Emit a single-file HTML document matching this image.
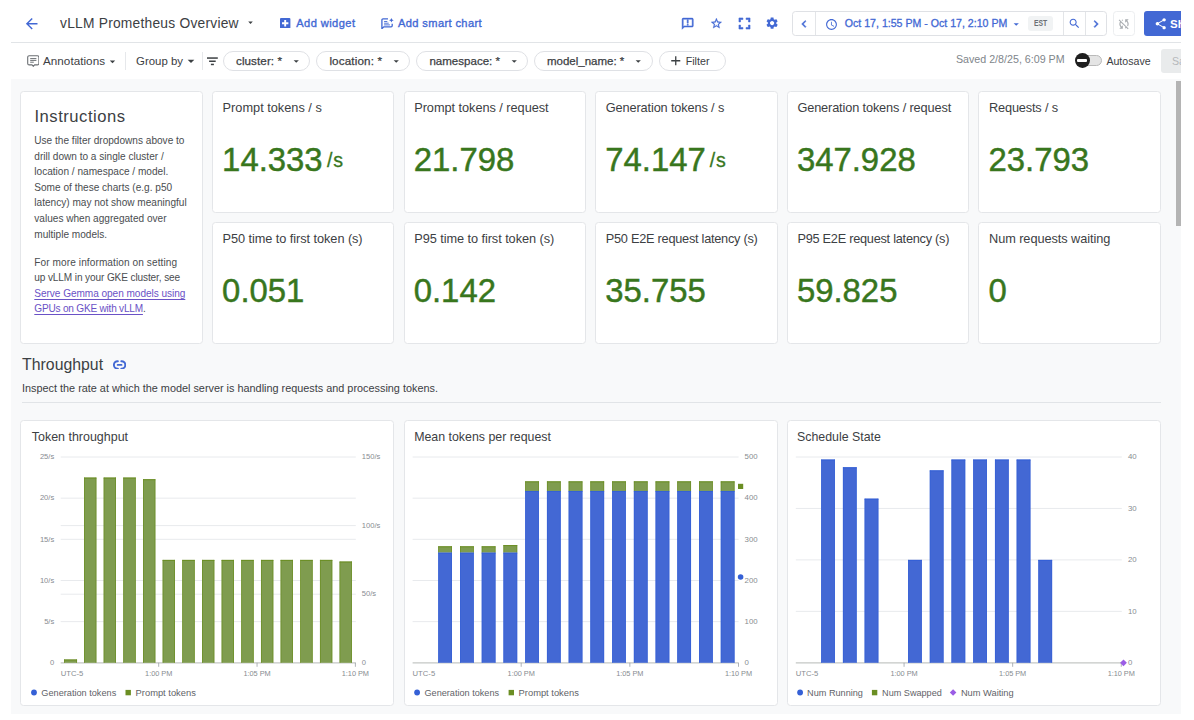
<!DOCTYPE html>
<html lang="en"><head><meta charset="utf-8"><title>vLLM Prometheus Overview</title>
<style>
html,body{margin:0;padding:0;background:#fff;}
body{width:1194px;height:720px;overflow:hidden;position:relative;font-family:"Liberation Sans",sans-serif;}
#bg{position:absolute;left:11px;top:79px;width:1170px;height:635px;background:#f8f9fa;}
#clip{position:absolute;left:0;top:0;width:1181px;height:720px;overflow:hidden;}
.abs{position:absolute;}
.ic{position:absolute;display:block;}
.t{position:absolute;white-space:pre;line-height:1;font-family:"Liberation Sans",sans-serif;}
.card{background:#fff;border:1px solid #e4e6e9;border-radius:3.5px;box-sizing:border-box;}
.box{border:1px solid #dfe1e5;border-radius:3.5px;box-sizing:border-box;background:#fff;}
.chip{border:1px solid #dfe1e5;border-radius:10px;background:#fff;}
#sv{position:absolute;left:0;top:0;}
</style></head>
<body><div id="clip"><div id="bg"></div>
<div class="abs card" style="left:20.3px;top:91px;width:182.6px;height:253px"></div>
<div class="abs card" style="left:211.9px;top:91px;width:182.6px;height:122px"></div>
<div class="abs card" style="left:403.5px;top:91px;width:182.6px;height:122px"></div>
<div class="abs card" style="left:595.1px;top:91px;width:182.6px;height:122px"></div>
<div class="abs card" style="left:786.7px;top:91px;width:182.6px;height:122px"></div>
<div class="abs card" style="left:978.3px;top:91px;width:182.6px;height:122px"></div>
<div class="abs card" style="left:211.9px;top:222px;width:182.6px;height:122px"></div>
<div class="abs card" style="left:403.5px;top:222px;width:182.6px;height:122px"></div>
<div class="abs card" style="left:595.1px;top:222px;width:182.6px;height:122px"></div>
<div class="abs card" style="left:786.7px;top:222px;width:182.6px;height:122px"></div>
<div class="abs card" style="left:978.3px;top:222px;width:182.6px;height:122px"></div>
<div class="abs card" style="left:20.3px;top:420px;width:374.2px;height:286px"></div>
<div class="abs card" style="left:403.6px;top:420px;width:374.2px;height:286px"></div>
<div class="abs card" style="left:786.7px;top:420px;width:374.2px;height:286px"></div>
<svg id="sv" width="1194" height="720" viewBox="0 0 1194 720">
<line x1="60.7" x2="355.8" y1="621.64" y2="621.64" stroke="#e8eaed" stroke-width="1"/>
<line x1="60.7" x2="355.8" y1="580.48" y2="580.48" stroke="#e8eaed" stroke-width="1"/>
<line x1="60.7" x2="355.8" y1="539.3199999999999" y2="539.3199999999999" stroke="#e8eaed" stroke-width="1"/>
<line x1="60.7" x2="355.8" y1="498.15999999999997" y2="498.15999999999997" stroke="#e8eaed" stroke-width="1"/>
<line x1="60.7" x2="355.8" y1="457.0" y2="457.0" stroke="#e8eaed" stroke-width="1"/>
<line x1="60.7" x2="355.8" y1="594.1999999999999" y2="594.1999999999999" stroke="#e8eaed" stroke-width="1"/>
<line x1="60.7" x2="355.8" y1="525.6" y2="525.6" stroke="#e8eaed" stroke-width="1"/>
<line x1="60.7" x2="355.8" y1="662.8" y2="662.8" stroke="#c4c7c5" stroke-width="1.2"/>
<rect x="64.03" y="659.51" width="13.00" height="3.29" fill="#7f9c4f"/>
<rect x="64.03" y="659.51" width="13.00" height="1" fill="#6b8e23"/>
<rect x="64.03" y="659.51" width="0.7" height="3.29" fill="#6b8e23"/>
<rect x="76.33" y="659.51" width="0.7" height="3.29" fill="#6b8e23"/>
<rect x="84.04" y="477.58" width="12.30" height="185.22" fill="#7f9c4f"/>
<rect x="84.04" y="477.58" width="12.30" height="1" fill="#6b8e23"/>
<rect x="84.04" y="477.58" width="0.7" height="185.22" fill="#6b8e23"/>
<rect x="95.64" y="477.58" width="0.7" height="185.22" fill="#6b8e23"/>
<rect x="103.70" y="477.58" width="12.30" height="185.22" fill="#7f9c4f"/>
<rect x="103.70" y="477.58" width="12.30" height="1" fill="#6b8e23"/>
<rect x="103.70" y="477.58" width="0.7" height="185.22" fill="#6b8e23"/>
<rect x="115.30" y="477.58" width="0.7" height="185.22" fill="#6b8e23"/>
<rect x="123.36" y="477.58" width="12.30" height="185.22" fill="#7f9c4f"/>
<rect x="123.36" y="477.58" width="12.30" height="1" fill="#6b8e23"/>
<rect x="123.36" y="477.58" width="0.7" height="185.22" fill="#6b8e23"/>
<rect x="134.96" y="477.58" width="0.7" height="185.22" fill="#6b8e23"/>
<rect x="143.02" y="479.23" width="12.30" height="183.57" fill="#7f9c4f"/>
<rect x="143.02" y="479.23" width="12.30" height="1" fill="#6b8e23"/>
<rect x="143.02" y="479.23" width="0.7" height="183.57" fill="#6b8e23"/>
<rect x="154.62" y="479.23" width="0.7" height="183.57" fill="#6b8e23"/>
<rect x="162.68" y="559.90" width="12.30" height="102.90" fill="#7f9c4f"/>
<rect x="162.68" y="559.90" width="12.30" height="1" fill="#6b8e23"/>
<rect x="162.68" y="559.90" width="0.7" height="102.90" fill="#6b8e23"/>
<rect x="174.28" y="559.90" width="0.7" height="102.90" fill="#6b8e23"/>
<rect x="182.34" y="559.90" width="12.30" height="102.90" fill="#7f9c4f"/>
<rect x="182.34" y="559.90" width="12.30" height="1" fill="#6b8e23"/>
<rect x="182.34" y="559.90" width="0.7" height="102.90" fill="#6b8e23"/>
<rect x="193.94" y="559.90" width="0.7" height="102.90" fill="#6b8e23"/>
<rect x="202.00" y="559.90" width="12.30" height="102.90" fill="#7f9c4f"/>
<rect x="202.00" y="559.90" width="12.30" height="1" fill="#6b8e23"/>
<rect x="202.00" y="559.90" width="0.7" height="102.90" fill="#6b8e23"/>
<rect x="213.60" y="559.90" width="0.7" height="102.90" fill="#6b8e23"/>
<rect x="221.66" y="559.90" width="12.30" height="102.90" fill="#7f9c4f"/>
<rect x="221.66" y="559.90" width="12.30" height="1" fill="#6b8e23"/>
<rect x="221.66" y="559.90" width="0.7" height="102.90" fill="#6b8e23"/>
<rect x="233.26" y="559.90" width="0.7" height="102.90" fill="#6b8e23"/>
<rect x="241.32" y="559.90" width="12.30" height="102.90" fill="#7f9c4f"/>
<rect x="241.32" y="559.90" width="12.30" height="1" fill="#6b8e23"/>
<rect x="241.32" y="559.90" width="0.7" height="102.90" fill="#6b8e23"/>
<rect x="252.92" y="559.90" width="0.7" height="102.90" fill="#6b8e23"/>
<rect x="260.98" y="559.90" width="12.30" height="102.90" fill="#7f9c4f"/>
<rect x="260.98" y="559.90" width="12.30" height="1" fill="#6b8e23"/>
<rect x="260.98" y="559.90" width="0.7" height="102.90" fill="#6b8e23"/>
<rect x="272.58" y="559.90" width="0.7" height="102.90" fill="#6b8e23"/>
<rect x="280.64" y="559.90" width="12.30" height="102.90" fill="#7f9c4f"/>
<rect x="280.64" y="559.90" width="12.30" height="1" fill="#6b8e23"/>
<rect x="280.64" y="559.90" width="0.7" height="102.90" fill="#6b8e23"/>
<rect x="292.24" y="559.90" width="0.7" height="102.90" fill="#6b8e23"/>
<rect x="300.30" y="559.90" width="12.30" height="102.90" fill="#7f9c4f"/>
<rect x="300.30" y="559.90" width="12.30" height="1" fill="#6b8e23"/>
<rect x="300.30" y="559.90" width="0.7" height="102.90" fill="#6b8e23"/>
<rect x="311.90" y="559.90" width="0.7" height="102.90" fill="#6b8e23"/>
<rect x="319.96" y="559.90" width="12.30" height="102.90" fill="#7f9c4f"/>
<rect x="319.96" y="559.90" width="12.30" height="1" fill="#6b8e23"/>
<rect x="319.96" y="559.90" width="0.7" height="102.90" fill="#6b8e23"/>
<rect x="331.56" y="559.90" width="0.7" height="102.90" fill="#6b8e23"/>
<rect x="339.62" y="561.55" width="12.30" height="101.25" fill="#7f9c4f"/>
<rect x="339.62" y="561.55" width="12.30" height="1" fill="#6b8e23"/>
<rect x="339.62" y="561.55" width="0.7" height="101.25" fill="#6b8e23"/>
<rect x="351.22" y="561.55" width="0.7" height="101.25" fill="#6b8e23"/>
<line x1="158.7" x2="158.7" y1="662.8" y2="666.8" stroke="#9aa0a6" stroke-width="0.8"/>
<line x1="257.04999999999995" x2="257.04999999999995" y1="662.8" y2="666.8" stroke="#9aa0a6" stroke-width="0.8"/>
<line x1="355.4" x2="355.4" y1="662.8" y2="666.8" stroke="#9aa0a6" stroke-width="0.8"/>
<circle cx="34" cy="692.5" r="2.9" fill="#3560d6"/>
<rect x="125.49999999999999" y="689.9" width="5.4" height="5.4" fill="#6b8e23"/>
<line x1="412.6" x2="738.6" y1="621.64" y2="621.64" stroke="#e8eaed" stroke-width="1"/>
<line x1="412.6" x2="738.6" y1="580.48" y2="580.48" stroke="#e8eaed" stroke-width="1"/>
<line x1="412.6" x2="738.6" y1="539.3199999999999" y2="539.3199999999999" stroke="#e8eaed" stroke-width="1"/>
<line x1="412.6" x2="738.6" y1="498.15999999999997" y2="498.15999999999997" stroke="#e8eaed" stroke-width="1"/>
<line x1="412.6" x2="738.6" y1="457.0" y2="457.0" stroke="#e8eaed" stroke-width="1"/>
<line x1="412.6" x2="738.6" y1="662.8" y2="662.8" stroke="#c4c7c5" stroke-width="1.2"/>
<rect x="438.30" y="546.32" width="13.70" height="6.38" fill="#7f9c4f"/>
<rect x="438.30" y="546.32" width="13.70" height="1" fill="#6b8e23"/>
<rect x="438.30" y="546.32" width="0.7" height="6.38" fill="#6b8e23"/>
<rect x="451.30" y="546.32" width="0.7" height="6.38" fill="#6b8e23"/>
<rect x="438.30" y="552.70" width="13.70" height="110.10" fill="#4368d4"/>
<rect x="438.30" y="552.70" width="13.70" height="1" fill="#3560d6"/>
<rect x="438.30" y="552.70" width="0.7" height="110.10" fill="#3560d6"/>
<rect x="451.30" y="552.70" width="0.7" height="110.10" fill="#3560d6"/>
<rect x="460.03" y="546.32" width="13.70" height="6.38" fill="#7f9c4f"/>
<rect x="460.03" y="546.32" width="13.70" height="1" fill="#6b8e23"/>
<rect x="460.03" y="546.32" width="0.7" height="6.38" fill="#6b8e23"/>
<rect x="473.03" y="546.32" width="0.7" height="6.38" fill="#6b8e23"/>
<rect x="460.03" y="552.70" width="13.70" height="110.10" fill="#4368d4"/>
<rect x="460.03" y="552.70" width="13.70" height="1" fill="#3560d6"/>
<rect x="460.03" y="552.70" width="0.7" height="110.10" fill="#3560d6"/>
<rect x="473.03" y="552.70" width="0.7" height="110.10" fill="#3560d6"/>
<rect x="481.75" y="546.32" width="13.70" height="6.38" fill="#7f9c4f"/>
<rect x="481.75" y="546.32" width="13.70" height="1" fill="#6b8e23"/>
<rect x="481.75" y="546.32" width="0.7" height="6.38" fill="#6b8e23"/>
<rect x="494.75" y="546.32" width="0.7" height="6.38" fill="#6b8e23"/>
<rect x="481.75" y="552.70" width="13.70" height="110.10" fill="#4368d4"/>
<rect x="481.75" y="552.70" width="13.70" height="1" fill="#3560d6"/>
<rect x="481.75" y="552.70" width="0.7" height="110.10" fill="#3560d6"/>
<rect x="494.75" y="552.70" width="0.7" height="110.10" fill="#3560d6"/>
<rect x="503.49" y="545.08" width="13.70" height="7.61" fill="#7f9c4f"/>
<rect x="503.49" y="545.08" width="13.70" height="1" fill="#6b8e23"/>
<rect x="503.49" y="545.08" width="0.7" height="7.61" fill="#6b8e23"/>
<rect x="516.49" y="545.08" width="0.7" height="7.61" fill="#6b8e23"/>
<rect x="503.49" y="552.70" width="13.70" height="110.10" fill="#4368d4"/>
<rect x="503.49" y="552.70" width="13.70" height="1" fill="#3560d6"/>
<rect x="503.49" y="552.70" width="0.7" height="110.10" fill="#3560d6"/>
<rect x="516.49" y="552.70" width="0.7" height="110.10" fill="#3560d6"/>
<rect x="525.22" y="481.37" width="13.70" height="9.59" fill="#7f9c4f"/>
<rect x="525.22" y="481.37" width="13.70" height="1" fill="#6b8e23"/>
<rect x="525.22" y="481.37" width="0.7" height="9.59" fill="#6b8e23"/>
<rect x="538.22" y="481.37" width="0.7" height="9.59" fill="#6b8e23"/>
<rect x="525.22" y="490.96" width="13.70" height="171.84" fill="#4368d4"/>
<rect x="525.22" y="490.96" width="13.70" height="1" fill="#3560d6"/>
<rect x="525.22" y="490.96" width="0.7" height="171.84" fill="#3560d6"/>
<rect x="538.22" y="490.96" width="0.7" height="171.84" fill="#3560d6"/>
<rect x="546.95" y="481.37" width="13.70" height="9.59" fill="#7f9c4f"/>
<rect x="546.95" y="481.37" width="13.70" height="1" fill="#6b8e23"/>
<rect x="546.95" y="481.37" width="0.7" height="9.59" fill="#6b8e23"/>
<rect x="559.95" y="481.37" width="0.7" height="9.59" fill="#6b8e23"/>
<rect x="546.95" y="490.96" width="13.70" height="171.84" fill="#4368d4"/>
<rect x="546.95" y="490.96" width="13.70" height="1" fill="#3560d6"/>
<rect x="546.95" y="490.96" width="0.7" height="171.84" fill="#3560d6"/>
<rect x="559.95" y="490.96" width="0.7" height="171.84" fill="#3560d6"/>
<rect x="568.68" y="481.37" width="13.70" height="9.59" fill="#7f9c4f"/>
<rect x="568.68" y="481.37" width="13.70" height="1" fill="#6b8e23"/>
<rect x="568.68" y="481.37" width="0.7" height="9.59" fill="#6b8e23"/>
<rect x="581.68" y="481.37" width="0.7" height="9.59" fill="#6b8e23"/>
<rect x="568.68" y="490.96" width="13.70" height="171.84" fill="#4368d4"/>
<rect x="568.68" y="490.96" width="13.70" height="1" fill="#3560d6"/>
<rect x="568.68" y="490.96" width="0.7" height="171.84" fill="#3560d6"/>
<rect x="581.68" y="490.96" width="0.7" height="171.84" fill="#3560d6"/>
<rect x="590.41" y="481.37" width="13.70" height="9.59" fill="#7f9c4f"/>
<rect x="590.41" y="481.37" width="13.70" height="1" fill="#6b8e23"/>
<rect x="590.41" y="481.37" width="0.7" height="9.59" fill="#6b8e23"/>
<rect x="603.41" y="481.37" width="0.7" height="9.59" fill="#6b8e23"/>
<rect x="590.41" y="490.96" width="13.70" height="171.84" fill="#4368d4"/>
<rect x="590.41" y="490.96" width="13.70" height="1" fill="#3560d6"/>
<rect x="590.41" y="490.96" width="0.7" height="171.84" fill="#3560d6"/>
<rect x="603.41" y="490.96" width="0.7" height="171.84" fill="#3560d6"/>
<rect x="612.13" y="481.37" width="13.70" height="9.59" fill="#7f9c4f"/>
<rect x="612.13" y="481.37" width="13.70" height="1" fill="#6b8e23"/>
<rect x="612.13" y="481.37" width="0.7" height="9.59" fill="#6b8e23"/>
<rect x="625.13" y="481.37" width="0.7" height="9.59" fill="#6b8e23"/>
<rect x="612.13" y="490.96" width="13.70" height="171.84" fill="#4368d4"/>
<rect x="612.13" y="490.96" width="13.70" height="1" fill="#3560d6"/>
<rect x="612.13" y="490.96" width="0.7" height="171.84" fill="#3560d6"/>
<rect x="625.13" y="490.96" width="0.7" height="171.84" fill="#3560d6"/>
<rect x="633.87" y="481.37" width="13.70" height="9.59" fill="#7f9c4f"/>
<rect x="633.87" y="481.37" width="13.70" height="1" fill="#6b8e23"/>
<rect x="633.87" y="481.37" width="0.7" height="9.59" fill="#6b8e23"/>
<rect x="646.87" y="481.37" width="0.7" height="9.59" fill="#6b8e23"/>
<rect x="633.87" y="490.96" width="13.70" height="171.84" fill="#4368d4"/>
<rect x="633.87" y="490.96" width="13.70" height="1" fill="#3560d6"/>
<rect x="633.87" y="490.96" width="0.7" height="171.84" fill="#3560d6"/>
<rect x="646.87" y="490.96" width="0.7" height="171.84" fill="#3560d6"/>
<rect x="655.60" y="481.37" width="13.70" height="9.59" fill="#7f9c4f"/>
<rect x="655.60" y="481.37" width="13.70" height="1" fill="#6b8e23"/>
<rect x="655.60" y="481.37" width="0.7" height="9.59" fill="#6b8e23"/>
<rect x="668.60" y="481.37" width="0.7" height="9.59" fill="#6b8e23"/>
<rect x="655.60" y="490.96" width="13.70" height="171.84" fill="#4368d4"/>
<rect x="655.60" y="490.96" width="13.70" height="1" fill="#3560d6"/>
<rect x="655.60" y="490.96" width="0.7" height="171.84" fill="#3560d6"/>
<rect x="668.60" y="490.96" width="0.7" height="171.84" fill="#3560d6"/>
<rect x="677.33" y="481.37" width="13.70" height="9.59" fill="#7f9c4f"/>
<rect x="677.33" y="481.37" width="13.70" height="1" fill="#6b8e23"/>
<rect x="677.33" y="481.37" width="0.7" height="9.59" fill="#6b8e23"/>
<rect x="690.33" y="481.37" width="0.7" height="9.59" fill="#6b8e23"/>
<rect x="677.33" y="490.96" width="13.70" height="171.84" fill="#4368d4"/>
<rect x="677.33" y="490.96" width="13.70" height="1" fill="#3560d6"/>
<rect x="677.33" y="490.96" width="0.7" height="171.84" fill="#3560d6"/>
<rect x="690.33" y="490.96" width="0.7" height="171.84" fill="#3560d6"/>
<rect x="699.06" y="481.37" width="13.70" height="9.59" fill="#7f9c4f"/>
<rect x="699.06" y="481.37" width="13.70" height="1" fill="#6b8e23"/>
<rect x="699.06" y="481.37" width="0.7" height="9.59" fill="#6b8e23"/>
<rect x="712.06" y="481.37" width="0.7" height="9.59" fill="#6b8e23"/>
<rect x="699.06" y="490.96" width="13.70" height="171.84" fill="#4368d4"/>
<rect x="699.06" y="490.96" width="13.70" height="1" fill="#3560d6"/>
<rect x="699.06" y="490.96" width="0.7" height="171.84" fill="#3560d6"/>
<rect x="712.06" y="490.96" width="0.7" height="171.84" fill="#3560d6"/>
<rect x="720.78" y="481.37" width="13.70" height="9.59" fill="#7f9c4f"/>
<rect x="720.78" y="481.37" width="13.70" height="1" fill="#6b8e23"/>
<rect x="720.78" y="481.37" width="0.7" height="9.59" fill="#6b8e23"/>
<rect x="733.78" y="481.37" width="0.7" height="9.59" fill="#6b8e23"/>
<rect x="720.78" y="490.96" width="13.70" height="171.84" fill="#4368d4"/>
<rect x="720.78" y="490.96" width="13.70" height="1" fill="#3560d6"/>
<rect x="720.78" y="490.96" width="0.7" height="171.84" fill="#3560d6"/>
<rect x="733.78" y="490.96" width="0.7" height="171.84" fill="#3560d6"/>
<line x1="521.2" x2="521.2" y1="662.8" y2="666.8" stroke="#9aa0a6" stroke-width="0.8"/>
<line x1="629.85" x2="629.85" y1="662.8" y2="666.8" stroke="#9aa0a6" stroke-width="0.8"/>
<line x1="738.5" x2="738.5" y1="662.8" y2="666.8" stroke="#9aa0a6" stroke-width="0.8"/>
<rect x="738" y="483.8" width="5.2" height="5.2" fill="#6b8e23"/>
<circle cx="740.6" cy="577" r="2.8" fill="#3560d6"/>
<circle cx="417.1" cy="692.5" r="2.9" fill="#3560d6"/>
<rect x="508.6" y="689.9" width="5.4" height="5.4" fill="#6b8e23"/>
<line x1="795.8" x2="1121.8" y1="611.3499999999999" y2="611.3499999999999" stroke="#e8eaed" stroke-width="1"/>
<line x1="795.8" x2="1121.8" y1="559.9" y2="559.9" stroke="#e8eaed" stroke-width="1"/>
<line x1="795.8" x2="1121.8" y1="508.45" y2="508.45" stroke="#e8eaed" stroke-width="1"/>
<line x1="795.8" x2="1121.8" y1="457.0" y2="457.0" stroke="#e8eaed" stroke-width="1"/>
<line x1="795.8" x2="1121.8" y1="662.8" y2="662.8" stroke="#c4c7c5" stroke-width="1.2"/>
<rect x="821.20" y="459.57" width="13.70" height="203.23" fill="#4368d4"/>
<rect x="821.20" y="459.57" width="13.70" height="1" fill="#3560d6"/>
<rect x="821.20" y="459.57" width="0.7" height="203.23" fill="#3560d6"/>
<rect x="834.20" y="459.57" width="0.7" height="203.23" fill="#3560d6"/>
<rect x="842.92" y="467.29" width="13.70" height="195.51" fill="#4368d4"/>
<rect x="842.92" y="467.29" width="13.70" height="1" fill="#3560d6"/>
<rect x="842.92" y="467.29" width="0.7" height="195.51" fill="#3560d6"/>
<rect x="855.92" y="467.29" width="0.7" height="195.51" fill="#3560d6"/>
<rect x="864.64" y="498.67" width="13.70" height="164.13" fill="#4368d4"/>
<rect x="864.64" y="498.67" width="13.70" height="1" fill="#3560d6"/>
<rect x="864.64" y="498.67" width="0.7" height="164.13" fill="#3560d6"/>
<rect x="877.64" y="498.67" width="0.7" height="164.13" fill="#3560d6"/>
<rect x="908.08" y="559.90" width="13.70" height="102.90" fill="#4368d4"/>
<rect x="908.08" y="559.90" width="13.70" height="1" fill="#3560d6"/>
<rect x="908.08" y="559.90" width="0.7" height="102.90" fill="#3560d6"/>
<rect x="921.08" y="559.90" width="0.7" height="102.90" fill="#3560d6"/>
<rect x="929.80" y="470.38" width="13.70" height="192.42" fill="#4368d4"/>
<rect x="929.80" y="470.38" width="13.70" height="1" fill="#3560d6"/>
<rect x="929.80" y="470.38" width="0.7" height="192.42" fill="#3560d6"/>
<rect x="942.80" y="470.38" width="0.7" height="192.42" fill="#3560d6"/>
<rect x="951.52" y="459.57" width="13.70" height="203.23" fill="#4368d4"/>
<rect x="951.52" y="459.57" width="13.70" height="1" fill="#3560d6"/>
<rect x="951.52" y="459.57" width="0.7" height="203.23" fill="#3560d6"/>
<rect x="964.52" y="459.57" width="0.7" height="203.23" fill="#3560d6"/>
<rect x="973.24" y="459.57" width="13.70" height="203.23" fill="#4368d4"/>
<rect x="973.24" y="459.57" width="13.70" height="1" fill="#3560d6"/>
<rect x="973.24" y="459.57" width="0.7" height="203.23" fill="#3560d6"/>
<rect x="986.24" y="459.57" width="0.7" height="203.23" fill="#3560d6"/>
<rect x="994.96" y="459.57" width="13.70" height="203.23" fill="#4368d4"/>
<rect x="994.96" y="459.57" width="13.70" height="1" fill="#3560d6"/>
<rect x="994.96" y="459.57" width="0.7" height="203.23" fill="#3560d6"/>
<rect x="1007.96" y="459.57" width="0.7" height="203.23" fill="#3560d6"/>
<rect x="1016.68" y="459.57" width="13.70" height="203.23" fill="#4368d4"/>
<rect x="1016.68" y="459.57" width="13.70" height="1" fill="#3560d6"/>
<rect x="1016.68" y="459.57" width="0.7" height="203.23" fill="#3560d6"/>
<rect x="1029.68" y="459.57" width="0.7" height="203.23" fill="#3560d6"/>
<rect x="1038.40" y="559.90" width="13.70" height="102.90" fill="#4368d4"/>
<rect x="1038.40" y="559.90" width="13.70" height="1" fill="#3560d6"/>
<rect x="1038.40" y="559.90" width="0.7" height="102.90" fill="#3560d6"/>
<rect x="1051.40" y="559.90" width="0.7" height="102.90" fill="#3560d6"/>
<line x1="904.07" x2="904.07" y1="662.8" y2="666.8" stroke="#9aa0a6" stroke-width="0.8"/>
<line x1="1012.6700000000001" x2="1012.6700000000001" y1="662.8" y2="666.8" stroke="#9aa0a6" stroke-width="0.8"/>
<line x1="1121.27" x2="1121.27" y1="662.8" y2="666.8" stroke="#9aa0a6" stroke-width="0.8"/>
<path d="M1123.5 659.4 l3.4 3.4 -3.4 3.4 -3.4 -3.4z" fill="#9b5de5"/>
<circle cx="800.1" cy="692.5" r="2.9" fill="#3560d6"/>
<rect x="871.9" y="689.9" width="5.4" height="5.4" fill="#6b8e23"/>
<path d="M953.1 689.2 l3.3 3.3 -3.3 3.3 -3.3 -3.3z" fill="#9b5de5"/>
</svg>
<svg class="ic" style="left:23.3px;top:14.9px" width="17.4" height="17.4" viewBox="0 0 24 24" fill="#4268d4" ><path d="M20 11H7.83l5.59-5.59L12 4l-8 8 8 8 1.41-1.41L7.83 13H20v-2z"/></svg>
<svg class="ic" style="left:244.5px;top:16.8px" width="11" height="11" viewBox="0 0 24 24" fill="#3c4043" ><path d="M7 10l5 5 5-5z"/></svg>
<svg class="ic" style="left:280.3px;top:17.9px" width="10.4" height="10.6" viewBox="0 0 10.4 10.6"><rect width="10.4" height="10.6" rx="1" fill="#4268d4"/><path d="M2 5.3h6.4M5.2 2.1v6.4" stroke="#fff" stroke-width="1.9"/></svg>
<svg class="ic" style="left:381px;top:17.6px" width="13" height="11.6" viewBox="0 0 13 11.6" fill="none" stroke="#4268d4" stroke-width="1.3"><path d="M7 0.9H2a1.1 1.1 0 0 0-1.1 1.1v8.7l1.9-1.8h7.3a1.1 1.1 0 0 0 1.1-1.1V5.8"/><path d="M3.1 3.5h3.2M3.1 5.2h4.6M3.1 6.9h5.8" stroke-width="0.9"/><path d="M10.4 0l.7 1.6 1.6.7-1.6.7-.7 1.6-.7-1.6-1.6-.7 1.6-.7z" fill="#4268d4" stroke="none"/></svg>
<svg class="ic" style="left:681.4px;top:17.1px" width="13.4" height="13.4" viewBox="0 0 24 24" fill="#4268d4" stroke="#4268d4" stroke-width="0.9" stroke-linejoin="round"><path d="M20 2H4c-1.1 0-2 .9-2 2v18l4-4h14c1.1 0 2-.9 2-2V4c0-1.1-.9-2-2-2zm0 14H5.17L4 17.17V4h16v12zM11 5h2v6h-2zm0 8h2v2h-2z"/></svg>
<svg class="ic" style="left:709.6px;top:16.7px" width="12.8" height="12.8" viewBox="0 0 24 24" fill="#4268d4" stroke="#4268d4" stroke-width="0.5"><path d="M22 9.24l-7.19-.62L12 2 9.19 8.63 2 9.24l5.46 4.73L5.82 21 12 17.27 18.18 21l-1.63-7.03L22 9.24zM12 15.4l-3.76 2.27 1-4.28-3.32-2.88 4.38-.38L12 6.1l1.71 4.04 4.38.38-3.32 2.88 1 4.28L12 15.4z"/></svg>
<svg class="ic" style="left:734.5px;top:14.1px" width="19" height="19" viewBox="0 0 24 24" fill="#4268d4" stroke="#4268d4" stroke-width="0.7"><path d="M7 14H5v5h5v-2H7v-3zm-2-4h2V7h3V5H5v5zm12 7h-3v2h5v-5h-2v3zM14 5v2h3v3h2V5h-5z"/></svg>
<svg class="ic" style="left:765.3px;top:16.4px" width="14.2" height="14.2" viewBox="0 0 24 24" fill="#4268d4" ><path d="M19.14 12.94c.04-.3.06-.61.06-.94 0-.32-.02-.64-.07-.94l2.03-1.58c.18-.14.23-.41.12-.61l-1.92-3.32c-.12-.22-.37-.29-.59-.22l-2.39.96c-.5-.38-1.03-.7-1.62-.94l-.36-2.54c-.04-.24-.24-.41-.48-.41h-3.84c-.24 0-.43.17-.47.41l-.36 2.54c-.59.24-1.13.57-1.62.94l-2.39-.96c-.22-.08-.47 0-.59.22L2.74 8.87c-.12.21-.08.47.12.61l2.03 1.58c-.05.3-.09.63-.09.94s.02.64.07.94l-2.03 1.58c-.18.14-.23.41-.12.61l1.92 3.32c.12.22.37.29.59.22l2.39-.96c.5.38 1.03.7 1.62.94l.36 2.54c.05.24.24.41.48.41h3.84c.24 0 .44-.17.47-.41l.36-2.54c.59-.24 1.13-.56 1.62-.94l2.39.96c.22.08.47 0 .59-.22l1.92-3.32c.12-.22.07-.47-.12-.61l-2.01-1.58zM12 15.6c-1.98 0-3.6-1.62-3.6-3.6s1.62-3.6 3.6-3.6 3.6 1.62 3.6 3.6-1.62 3.6-3.6 3.6z"/></svg>
<div class="abs box" style="left:792.2px;top:11px;width:315px;height:25px"></div>
<div class="abs" style="left:814.5px;top:12px;width:1px;height:23px;background:#e3e5e8"></div>
<div class="abs" style="left:1062.8px;top:12px;width:1px;height:23px;background:#e3e5e8"></div>
<div class="abs" style="left:1084.8px;top:12px;width:1px;height:23px;background:#e3e5e8"></div>
<svg class="ic" style="left:796.8px;top:16.5px" width="14" height="14" viewBox="0 0 24 24" fill="#4268d4" stroke="#4268d4" stroke-width="0.9"><path d="M15.41 7.41L14 6l-6 6 6 6 1.41-1.41L10.83 12z"/></svg>
<svg class="ic" style="left:824.8px;top:17.9px" width="13" height="13" viewBox="0 0 24 24" fill="#4268d4" ><path d="M11.99 2C6.47 2 2 6.48 2 12s4.47 10 9.99 10C17.52 22 22 17.52 22 12S17.52 2 11.99 2zM12 20c-4.42 0-8-3.58-8-8s3.58-8 8-8 8 3.58 8 8-3.58 8-8 8zm.5-13H11v6l5.25 3.15.75-1.23-4.5-2.67z"/></svg>
<svg class="ic" style="left:1009.95px;top:17.55px" width="12.5" height="12.5" viewBox="0 0 24 24" fill="#4268d4" ><path d="M7 10l5 5 5-5z"/></svg>
<div class="abs" style="left:1028.2px;top:15.6px;width:25.2px;height:15px;background:#f1f3f4;border-radius:3px"></div>
<svg class="ic" style="left:1067.7px;top:17.1px" width="13" height="13" viewBox="0 0 24 24" fill="#4268d4" ><path d="M15.5 14h-.79l-.28-.27C15.41 12.59 16 11.11 16 9.5 16 5.91 13.09 3 9.5 3S3 5.91 3 9.5 5.91 16 9.5 16c1.61 0 3.09-.59 4.23-1.57l.27.28v.79l5 4.99L20.49 19l-4.99-5zm-6 0C7.01 14 5 11.99 5 9.5S7.01 5 9.5 5 14 7.01 14 9.5 11.99 14 9.5 14z"/></svg>
<svg class="ic" style="left:1088.7px;top:16.5px" width="14" height="14" viewBox="0 0 24 24" fill="#4268d4" stroke="#4268d4" stroke-width="0.9"><path d="M10 6L8.59 7.41 13.17 12l-4.58 4.59L10 18l6-6z"/></svg>
<div class="abs box" style="left:1112.6px;top:11px;width:22.4px;height:25px;border-color:#eceef0"></div>
<svg class="ic" style="left:1116.8px;top:16.6px" width="14" height="14" viewBox="0 0 24 24" fill="#a9adb1" ><path d="M10 6.35V4.26c-.8.21-1.55.54-2.23.96l1.46 1.46c.25-.12.5-.24.77-.33zm-7.14-.94l2.36 2.36C4.45 8.99 4 10.44 4 12c0 2.21.91 4.2 2.36 5.64L4 20h6v-6l-2.24 2.24C6.68 15.15 6 13.66 6 12c0-1 .25-1.94.68-2.77l8.08 8.08c-.25.13-.5.25-.77.34v2.09c.8-.21 1.55-.54 2.23-.96l2.36 2.36 1.27-1.27L4.14 4.14 2.86 5.41zM20 4h-6v6l2.24-2.24C17.32 8.85 18 10.34 18 12c0 1-.25 1.94-.68 2.77l1.46 1.46C19.55 15.01 20 13.56 20 12c0-2.21-.91-4.2-2.36-5.64L20 4z"/></svg>
<div class="abs" style="left:1144.3px;top:11px;width:60px;height:25px;background:#4268d4;border-radius:3px"></div>
<svg class="ic" style="left:1153.85px;top:16.55px" width="13.5" height="13.5" viewBox="0 0 24 24" fill="#fff" ><path d="M18 16.08c-.76 0-1.44.3-1.96.77L8.91 12.7c.05-.23.09-.46.09-.7s-.04-.47-.09-.7l7.05-4.11c.54.5 1.25.81 2.04.81 1.66 0 3-1.34 3-3s-1.34-3-3-3-3 1.34-3 3c0 .24.04.47.09.7L8.04 9.81C7.5 9.31 6.79 9 6 9c-1.66 0-3 1.34-3 3s1.34 3 3 3c.79 0 1.5-.31 2.04-.81l7.12 4.16c-.05.21-.08.43-.08.65 0 1.61 1.31 2.92 2.92 2.92 1.61 0 2.92-1.31 2.92-2.92s-1.31-2.92-2.92-2.92z"/></svg>
<div class="abs" style="left:11px;top:42px;width:1170px;height:1px;background:#e1e4e7"></div>
<svg class="ic" style="left:26.6px;top:54.8px" width="12.6" height="12.2" viewBox="0 0 12.6 12.2" fill="none" stroke="#6b6f73" stroke-width="1.1"><path d="M2.2 0.7h8.2a1.5 1.5 0 0 1 1.5 1.5v6.2a1.5 1.5 0 0 1-1.5 1.5H7.6L6.3 11.3 5 9.9H2.2a1.5 1.5 0 0 1-1.5-1.5V2.2a1.5 1.5 0 0 1 1.5-1.5z"/><path d="M3.2 3.6h6.2M3.2 5.4h6.2M3.2 7.2h3.6" stroke-width="1"/></svg>
<svg class="ic" style="left:105.9px;top:54.9px" width="13" height="13" viewBox="0 0 24 24" fill="#3c4043" ><path d="M7 10l5 5 5-5z"/></svg>
<div class="abs" style="left:125.2px;top:52px;width:1px;height:18px;background:#e6e8eb"></div>
<svg class="ic" style="left:183.0px;top:53.4px" width="16" height="16" viewBox="0 0 24 24" fill="#3c4043" ><path d="M7 10l5 5 5-5z"/></svg>
<div class="abs" style="left:201.6px;top:52px;width:1px;height:18px;background:#e6e8eb"></div>
<svg class="ic" style="left:207px;top:56.8px" width="11" height="9" viewBox="0 0 11 9" fill="#3c4043"><rect x="0" y="0.3" width="10.8" height="1.5"/><rect x="2.1" y="3.5" width="6.6" height="1.5"/><rect x="3.9" y="6.7" width="3" height="1.5"/></svg>
<div class="abs chip" style="left:222.6px;top:51px;width:85.70000000000002px;height:18px"></div>
<svg class="ic" style="left:289.75px;top:55.05px" width="12.5" height="12.5" viewBox="0 0 24 24" fill="#3c4043" ><path d="M7 10l5 5 5-5z"/></svg>
<div class="abs chip" style="left:316px;top:51px;width:92px;height:18px"></div>
<svg class="ic" style="left:389.75px;top:55.05px" width="12.5" height="12.5" viewBox="0 0 24 24" fill="#3c4043" ><path d="M7 10l5 5 5-5z"/></svg>
<div class="abs chip" style="left:415.6px;top:51px;width:110.39999999999998px;height:18px"></div>
<svg class="ic" style="left:507.55px;top:55.05px" width="12.5" height="12.5" viewBox="0 0 24 24" fill="#3c4043" ><path d="M7 10l5 5 5-5z"/></svg>
<div class="abs chip" style="left:533.7px;top:51px;width:117.29999999999995px;height:18px"></div>
<svg class="ic" style="left:631.65px;top:55.05px" width="12.5" height="12.5" viewBox="0 0 24 24" fill="#3c4043" ><path d="M7 10l5 5 5-5z"/></svg>
<div class="abs chip" style="left:658.8px;top:51px;width:65.10000000000002px;height:18px"></div>
<svg class="ic" style="left:667.75px;top:53.25px" width="15.5" height="15.5" viewBox="0 0 24 24" fill="#3c4043" ><path d="M19 13h-6v6h-2v-6H5v-2h6V5h2v6h6v2z"/></svg>
<div class="abs" style="left:1082px;top:55px;width:20.4px;height:11px;background:#e4e4e4;border:0.8px solid #b9b9b9;border-radius:6px;box-sizing:border-box"></div>
<div class="abs" style="left:1074.8px;top:53.2px;width:14.8px;height:14.8px;background:#1f1f1f;border-radius:50%"></div>
<div class="abs" style="left:1077.2px;top:59.4px;width:10px;height:2.4px;background:#fff;border-radius:1px"></div>
<div class="abs" style="left:1161px;top:48.9px;width:40px;height:24px;background:#e9ebec;border-radius:3px"></div>
<svg class="ic" style="left:113px;top:359.6px" width="13.2" height="9.8" viewBox="0 0 13.2 9.8" fill="none" stroke="#4268d4" stroke-width="1.9" stroke-linecap="round"><path d="M4.9 1.2H4.6a3.7 3.7 0 0 0 0 7.4h0.3M8.3 1.2h0.3a3.7 3.7 0 0 1 0 7.4H8.3M4.7 4.9h3.8"/></svg>
<div class="abs" style="left:22px;top:402px;width:1139px;height:1px;background:#e1e4e7"></div>
<div class="abs" style="left:1176.3px;top:81px;width:4.7px;height:144.5px;background:#b4b4b4"></div>
<span class="t" style="left:60.00px;top:17px;font-size:13.80px;color:#3c4043;letter-spacing:0.229px;">vLLM Prometheus Overview</span>
<span class="t" style="left:296.20px;top:18px;font-size:11.12px;color:#4268d4;letter-spacing:0.426px;-webkit-text-stroke:0.35px #4268d4;">Add widget</span>
<span class="t" style="left:398.00px;top:18px;font-size:11.12px;color:#4268d4;letter-spacing:0.371px;-webkit-text-stroke:0.35px #4268d4;">Add smart chart</span>
<span class="t" style="left:844.80px;top:18px;font-size:10.60px;color:#4268d4;-webkit-text-stroke:0.3px #4268d4;">Oct 17, 1:55 PM - Oct 17, 2:10 PM</span>
<span class="t" style="left:1033.80px;top:19px;font-size:8.60px;color:#6c7075;font-weight:700;transform:scaleX(.79);transform-origin:0 0;">EST</span>
<span class="t" style="left:1170.00px;top:19px;font-size:11.50px;color:#fff;font-weight:700;">Share</span>
<span class="t" style="left:43.00px;top:55px;font-size:11.66px;color:#3c4043;letter-spacing:0.043px;">Annotations</span>
<span class="t" style="left:136.00px;top:56px;font-size:11.43px;color:#3c4043;">Group by</span>
<span class="t" style="left:236.00px;top:55px;font-size:11.66px;color:#3c4043;letter-spacing:0.073px;-webkit-text-stroke:0.25px #3c4043;">cluster: *</span>
<span class="t" style="left:329.40px;top:55px;font-size:11.66px;color:#3c4043;letter-spacing:0.142px;-webkit-text-stroke:0.25px #3c4043;">location: *</span>
<span class="t" style="left:429.40px;top:56px;font-size:11.55px;color:#3c4043;-webkit-text-stroke:0.25px #3c4043;">namespace: *</span>
<span class="t" style="left:547.00px;top:56px;font-size:11.51px;color:#3c4043;-webkit-text-stroke:0.25px #3c4043;">model_name: *</span>
<span class="t" style="left:685.70px;top:56px;font-size:10.71px;color:#3c4043;">Filter</span>
<span class="t" style="left:955.90px;top:54px;font-size:10.70px;color:#80868b;">Saved 2/8/25, 6:09 PM</span>
<span class="t" style="left:1106.40px;top:56px;font-size:10.61px;color:#3c4043;">Autosave</span>
<span class="t" style="left:1172.00px;top:56px;font-size:10.60px;color:#b5b8bb;">Save</span>
<span class="t" style="left:34.50px;top:109px;font-size:16.60px;color:#3c4043;letter-spacing:0.513px;">Instructions</span>
<span class="t" style="left:34.30px;top:136px;font-size:10.09px;color:#4a4d50;">Use the filter dropdowns above to</span>
<span class="t" style="left:34.30px;top:152px;font-size:10.09px;color:#4a4d50;">drill down to a single cluster /</span>
<span class="t" style="left:34.30px;top:167px;font-size:10.09px;color:#4a4d50;">location / namespace / model.</span>
<span class="t" style="left:34.30px;top:183px;font-size:10.09px;color:#4a4d50;">Some of these charts (e.g. p50</span>
<span class="t" style="left:34.30px;top:198px;font-size:10.09px;color:#4a4d50;">latency) may not show meaningful</span>
<span class="t" style="left:34.30px;top:214px;font-size:10.09px;color:#4a4d50;">values when aggregated over</span>
<span class="t" style="left:34.30px;top:230px;font-size:10.09px;color:#4a4d50;">multiple models.</span>
<span class="t" style="left:34.30px;top:258px;font-size:10.09px;color:#4a4d50;letter-spacing:0.093px;">For more information on setting</span>
<span class="t" style="left:34.30px;top:273px;font-size:10.09px;color:#4a4d50;letter-spacing:-0.120px;">up vLLM in your GKE cluster, see</span>
<span class="t" style="left:34.30px;top:289px;font-size:10.09px;color:#6a52c6;letter-spacing:-0.047px;text-decoration:underline;text-underline-offset:1.5px;">Serve Gemma open models using</span>
<span class="t" style="left:34.30px;top:304px;font-size:10.09px;color:#4a4d50;letter-spacing:-0.216px;"><span style="color:#6a52c6;text-decoration:underline;text-underline-offset:1.5px">GPUs on GKE with vLLM</span>.</span>
<span class="t" style="left:222.60px;top:102px;font-size:12.76px;color:#3c4043;">Prompt tokens / s</span>
<span class="t" style="left:222.10px;top:144px;font-size:32.89px;color:#38761d;-webkit-text-stroke:0.45px #38761d;">14.333</span>
<span class="t" style="left:414.20px;top:102px;font-size:12.76px;color:#3c4043;letter-spacing:-0.043px;">Prompt tokens / request</span>
<span class="t" style="left:413.70px;top:144px;font-size:32.89px;color:#38761d;-webkit-text-stroke:0.45px #38761d;">21.798</span>
<span class="t" style="left:605.80px;top:102px;font-size:12.76px;color:#3c4043;letter-spacing:-0.134px;">Generation tokens / s</span>
<span class="t" style="left:605.30px;top:144px;font-size:32.89px;color:#38761d;-webkit-text-stroke:0.45px #38761d;">74.147</span>
<span class="t" style="left:797.40px;top:102px;font-size:12.76px;color:#3c4043;letter-spacing:-0.136px;">Generation tokens / request</span>
<span class="t" style="left:796.90px;top:144px;font-size:32.89px;color:#38761d;-webkit-text-stroke:0.45px #38761d;">347.928</span>
<span class="t" style="left:989.00px;top:102px;font-size:12.76px;color:#3c4043;letter-spacing:-0.160px;">Requests / s</span>
<span class="t" style="left:988.50px;top:144px;font-size:32.89px;color:#38761d;-webkit-text-stroke:0.45px #38761d;">23.793</span>
<span class="t" style="left:222.60px;top:233px;font-size:12.76px;color:#3c4043;letter-spacing:-0.065px;">P50 time to first token (s)</span>
<span class="t" style="left:222.10px;top:275px;font-size:32.89px;color:#38761d;-webkit-text-stroke:0.45px #38761d;">0.051</span>
<span class="t" style="left:414.20px;top:233px;font-size:12.76px;color:#3c4043;letter-spacing:-0.065px;">P95 time to first token (s)</span>
<span class="t" style="left:413.70px;top:275px;font-size:32.89px;color:#38761d;-webkit-text-stroke:0.45px #38761d;">0.142</span>
<span class="t" style="left:605.80px;top:233px;font-size:12.76px;color:#3c4043;letter-spacing:-0.259px;">P50 E2E request latency (s)</span>
<span class="t" style="left:605.30px;top:275px;font-size:32.89px;color:#38761d;-webkit-text-stroke:0.45px #38761d;">35.755</span>
<span class="t" style="left:797.40px;top:233px;font-size:12.76px;color:#3c4043;letter-spacing:-0.259px;">P95 E2E request latency (s)</span>
<span class="t" style="left:796.90px;top:275px;font-size:32.89px;color:#38761d;-webkit-text-stroke:0.45px #38761d;">59.825</span>
<span class="t" style="left:989.00px;top:233px;font-size:12.76px;color:#3c4043;letter-spacing:-0.067px;">Num requests waiting</span>
<span class="t" style="left:988.50px;top:275px;font-size:32.89px;color:#38761d;-webkit-text-stroke:0.45px #38761d;">0</span>
<span class="t" style="left:22.10px;top:357px;font-size:15.84px;color:#3c4043;">Throughput</span>
<span class="t" style="left:22.00px;top:383px;font-size:10.87px;color:#3c4043;">Inspect the rate at which the model server is handling requests and processing tokens.</span>
<span class="t" style="left:31.80px;top:431px;font-size:12.46px;color:#3c4043;">Token throughput</span>
<span class="t" style="left:50.06px;top:659px;font-size:7.62px;color:#878c91;">0</span>
<span class="t" style="left:44.14px;top:618px;font-size:7.62px;color:#878c91;">5/s</span>
<span class="t" style="left:39.90px;top:577px;font-size:7.62px;color:#878c91;">10/s</span>
<span class="t" style="left:39.90px;top:536px;font-size:7.62px;color:#878c91;">15/s</span>
<span class="t" style="left:39.90px;top:494px;font-size:7.62px;color:#878c91;">20/s</span>
<span class="t" style="left:39.90px;top:453px;font-size:7.62px;color:#878c91;">25/s</span>
<span class="t" style="left:361.80px;top:659px;font-size:7.60px;color:#878c91;">0</span>
<span class="t" style="left:361.80px;top:590px;font-size:7.60px;color:#878c91;">50/s</span>
<span class="t" style="left:361.80px;top:522px;font-size:7.60px;color:#878c91;">100/s</span>
<span class="t" style="left:361.80px;top:453px;font-size:7.60px;color:#878c91;">150/s</span>
<span class="t" style="left:145.10px;top:670px;font-size:7.36px;color:#878c91;letter-spacing:-0.036px;">1:00 PM</span>
<span class="t" style="left:243.45px;top:670px;font-size:7.36px;color:#878c91;letter-spacing:-0.036px;">1:05 PM</span>
<span class="t" style="left:341.80px;top:670px;font-size:7.36px;color:#878c91;letter-spacing:-0.036px;">1:10 PM</span>
<span class="t" style="left:60.70px;top:670px;font-size:7.67px;color:#878c91;">UTC-5</span>
<span class="t" style="left:41.30px;top:689px;font-size:9.18px;color:#5f6368;">Generation tokens</span>
<span class="t" style="left:135.60px;top:689px;font-size:9.35px;color:#5f6368;">Prompt tokens</span>
<span class="t" style="left:414.20px;top:431px;font-size:12.37px;color:#3c4043;">Mean tokens per request</span>
<span class="t" style="left:744.60px;top:659px;font-size:7.84px;color:#878c91;">0</span>
<span class="t" style="left:744.60px;top:618px;font-size:7.84px;color:#878c91;">100</span>
<span class="t" style="left:744.60px;top:577px;font-size:7.84px;color:#878c91;">200</span>
<span class="t" style="left:744.60px;top:536px;font-size:7.84px;color:#878c91;">300</span>
<span class="t" style="left:744.60px;top:494px;font-size:7.84px;color:#878c91;">400</span>
<span class="t" style="left:744.60px;top:453px;font-size:7.84px;color:#878c91;">500</span>
<span class="t" style="left:507.60px;top:670px;font-size:7.36px;color:#878c91;letter-spacing:-0.036px;">1:00 PM</span>
<span class="t" style="left:616.25px;top:670px;font-size:7.36px;color:#878c91;letter-spacing:-0.036px;">1:05 PM</span>
<span class="t" style="left:724.90px;top:670px;font-size:7.36px;color:#878c91;letter-spacing:-0.036px;">1:10 PM</span>
<span class="t" style="left:412.60px;top:670px;font-size:7.67px;color:#878c91;">UTC-5</span>
<span class="t" style="left:424.50px;top:689px;font-size:9.13px;color:#5f6368;">Generation tokens</span>
<span class="t" style="left:518.60px;top:689px;font-size:9.35px;color:#5f6368;">Prompt tokens</span>
<span class="t" style="left:797.00px;top:431px;font-size:12.37px;color:#3c4043;">Schedule State</span>
<span class="t" style="left:1128.00px;top:659px;font-size:7.84px;color:#878c91;">0</span>
<span class="t" style="left:1128.00px;top:608px;font-size:7.84px;color:#878c91;">10</span>
<span class="t" style="left:1128.00px;top:556px;font-size:7.84px;color:#878c91;">20</span>
<span class="t" style="left:1128.00px;top:505px;font-size:7.84px;color:#878c91;">30</span>
<span class="t" style="left:1128.00px;top:453px;font-size:7.84px;color:#878c91;">40</span>
<span class="t" style="left:890.47px;top:670px;font-size:7.36px;color:#878c91;letter-spacing:-0.036px;">1:00 PM</span>
<span class="t" style="left:999.07px;top:670px;font-size:7.36px;color:#878c91;letter-spacing:-0.036px;">1:05 PM</span>
<span class="t" style="left:1107.67px;top:670px;font-size:7.36px;color:#878c91;letter-spacing:-0.036px;">1:10 PM</span>
<span class="t" style="left:795.80px;top:670px;font-size:7.67px;color:#878c91;">UTC-5</span>
<span class="t" style="left:807.10px;top:689px;font-size:9.14px;color:#5f6368;">Num Running</span>
<span class="t" style="left:882.10px;top:689px;font-size:9.10px;color:#5f6368;">Num Swapped</span>
<span class="t" style="left:960.90px;top:689px;font-size:9.29px;color:#5f6368;">Num Waiting</span>
<span class="t" style="left:326.9px;top:151px;font-size:19.6px;color:#38761d;letter-spacing:0.9px;-webkit-text-stroke:0.3px #38761d">/s</span>
<span class="t" style="left:709.7px;top:151px;font-size:19.6px;color:#38761d;letter-spacing:0.9px;-webkit-text-stroke:0.3px #38761d">/s</span>
</div></body></html>
